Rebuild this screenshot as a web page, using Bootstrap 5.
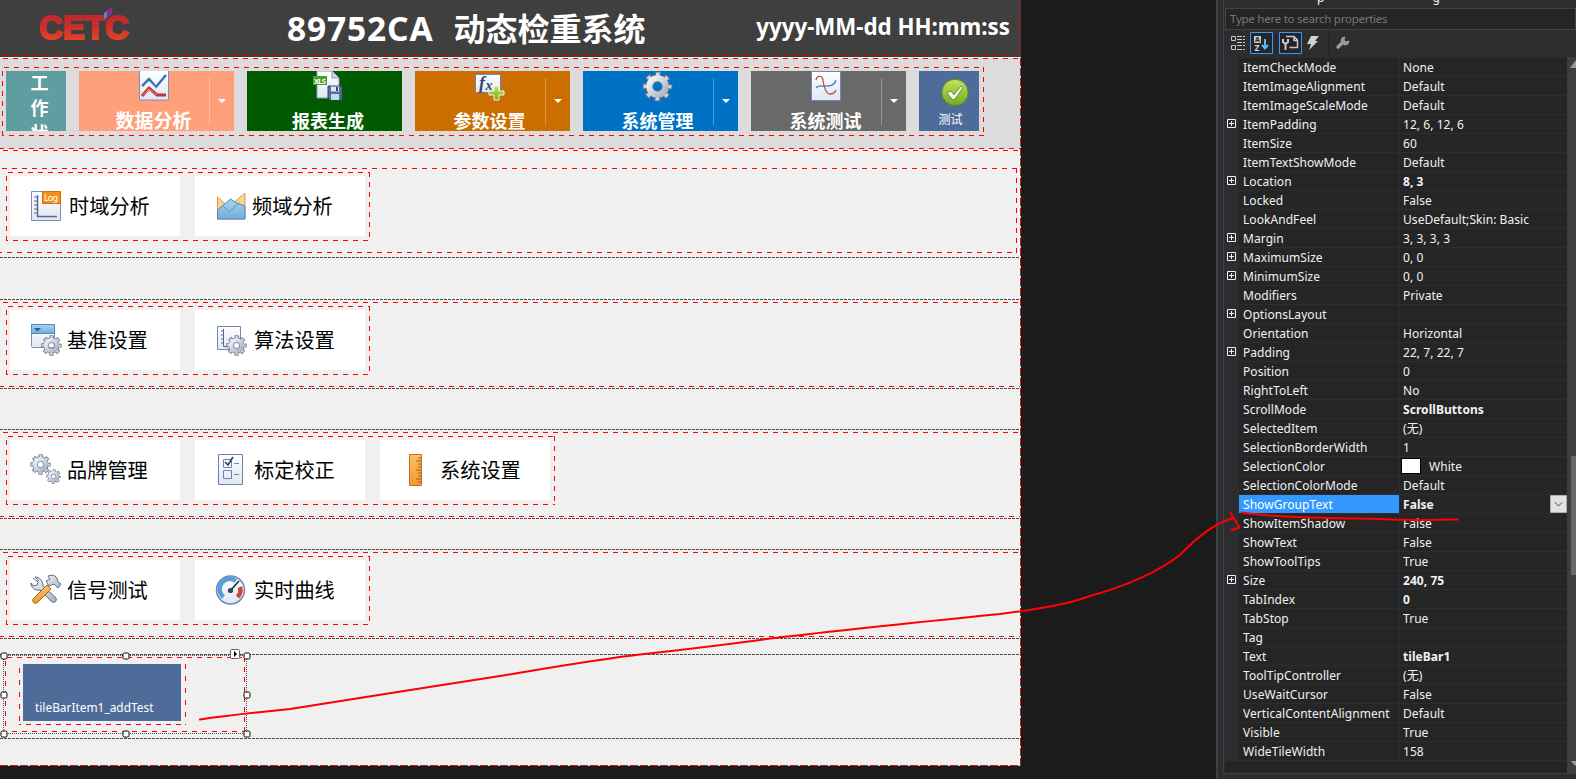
<!DOCTYPE html>
<html lang="zh-CN">
<head>
<meta charset="utf-8">
<title>89752CA 动态检重系统</title>
<link rel="stylesheet" href="https://cdn.jsdelivr.net/npm/bootstrap@5.3.0/dist/css/bootstrap.min.css">
<style>
  body{width:1576px;height:779px;background:#1b1b1c;overflow:hidden;font-family:"Noto Sans","Noto Sans CJK SC",sans-serif;line-height:1}
  svg{display:block;flex:none}
  .designer{width:1021px;height:766px;background:#f0f0f0}
  .designer::after{content:"";position:absolute;right:0;top:58px;bottom:0;width:1px;background:repeating-linear-gradient(#f00 0 5px,#555 5px 8px,#ddd 8px 10px)}
  .designer::before{content:"";position:absolute;left:0;right:0;bottom:0;height:1px;background:repeating-linear-gradient(90deg,#f00 0 5px,#555 5px 8px,#ddd 8px 10px)}
  .red-frame{--h:linear-gradient(90deg,#f00 5px,transparent 5px);--v:linear-gradient(#f00 5px,transparent 5px);
    background-image:var(--h),var(--h),var(--v),var(--v);background-size:10px 1px,10px 1px,1px 10px,1px 10px;
    background-position:2px 0,7px 100%,0 4px,100% 0;background-repeat:repeat-x,repeat-x,repeat-y,repeat-y}
  .red-lines{--h:linear-gradient(90deg,#f00 5px,transparent 5px);background-image:var(--h),var(--h);background-size:10px 1px;background-position:3px 0,9px 100%;background-repeat:repeat-x}
  .app-head{height:57px;background-color:#3f3f3f;color:#fff;font-weight:700}
  .app-head::after{content:"";position:absolute;left:3px;right:1px;top:0;height:56px;
    background:linear-gradient(90deg,#d40000 5px,transparent 5px) 0 100%/10px 1px repeat-x,linear-gradient(#d40000 5px,transparent 5px) 100% 7px/1px 10px repeat-y}
  .app-title{left:287px;top:11px;font-size:32px;line-height:36px;gap:20px;white-space:nowrap}
  .app-title .num{font-size:33.5px;letter-spacing:.85px;margin-top:-1px}
  .head-grid{padding-left:39px;height:56px}
  .clock{font-size:22.3px;line-height:30px;margin:-3px 11px 0 0}
  .strip{height:91px;margin-top:1px;background-color:#dcdcdc;padding:9px 0 0 2px}
  .bar{width:982px;height:69px;padding:4px 0 0 4px;gap:13px}
  .bar .tl{height:60px;width:155px;color:#fff;font-weight:700;font-size:18px}
  .bar .tl.sq{width:60px}
  .face{width:130px;padding-left:19px}
  .face svg{height:31px}
  .face span{margin-top:8px;line-height:22px}
  .drop{width:25px;height:47px;margin-top:7px;border-left:1px solid rgba(255,255,255,.3)}
  .drop::after{content:"";border:4px solid transparent;border-top-color:#fff;border-bottom:0;margin-top:-1px;margin-left:-1px}
  .dark-lines{--d:linear-gradient(90deg,#4c4c4c 3px,transparent 3px);background-image:var(--d),var(--d);background-size:4px 1px;background-position:0 0,0 100%;background-repeat:repeat-x}
  .sect{height:90px;padding:3px 0}
  .sect>.red-lines{height:85px;padding:4px 0 0 6px}
  .grp{height:69px;width:max-content;padding:4px 5px 5px 4px;gap:15px}
  .it{width:170px;height:60px;background:#fff;color:#000;font-size:20.2px;padding-left:20px;gap:5px}
  .it span{line-height:24px;white-space:nowrap}
  .sel{width:244px;height:79px;margin:1px 0 0 3px;border:1px dotted #555}
  .sel .inner{width:240px;height:75px;margin:1px;padding:7px 0 0 14px}
  .sel .blue{width:167px;height:61px;padding:0 0 0 4px}
  .sel .blue div{width:158px;height:57px;background:#4e6c9a;color:#fff;font-size:11.9px;padding:0 0 7px 12px}
  .hd{width:7px;height:7px;background:#fff;border:1px solid #000;border-radius:2px;transform:translate(-50%,-50%)}
  .props{left:1216px;top:0;width:360px;height:779px;background:#2d2d30;border-left:2px solid #3f3f46;color:#f1f1f1;font-size:12px}
  .props .inn{margin-left:5px;border-left:1px solid #3f3f46;height:774px;border-bottom:1px solid #3f3f46;padding-left:1px}
  .cap{height:8px;overflow:hidden;white-space:pre}
  .cap span{line-height:12px;margin-top:-8px}
  .search{height:22px;border:1px solid #434346;background:#252526;color:#777;padding-left:4px;font-size:11.5px;letter-spacing:-.25px}
  .tools{height:28px}
  .pr{height:19px}
  .pr .ex{width:14px;padding:4px 0 0 2px}
  .pr .k{width:160px;background:#252526;border-bottom:1px solid #2d2d30;padding:1px 0 0 4px}
  .pr .v{width:168px;background:#252526;border-bottom:1px solid #2d2d30;border-left:1px solid #2d2d30;padding:1px 0 0 3px}
  .pr.cur .k{background:#3399ff;color:#fff}
  .k,.v{line-height:18px;white-space:nowrap;letter-spacing:.06px}
  .sb{left:1567px;top:57px;width:9px;height:716px;background:#3e3e42}
</style>
</head>
<body>
<svg width="0" height="0" class="position-absolute">
  <defs>
    <linearGradient id="gm" x1="0" y1="0" x2="1" y2="1"><stop offset="0" stop-color="#f1f4f8"/><stop offset="1" stop-color="#a9b3c5"/></linearGradient>
    <linearGradient id="gp" x1="0" y1="0" x2="0" y2="1"><stop offset="0" stop-color="#fff"/><stop offset="1" stop-color="#e0e6f4"/></linearGradient>
    <linearGradient id="gl" x1="0" y1="0" x2="0" y2="1"><stop offset="0" stop-color="#b5252d"/><stop offset=".5" stop-color="#c9302b"/><stop offset="1" stop-color="#f04e23"/></linearGradient>
    <linearGradient id="gg" x1="0" y1="0" x2="0" y2="1"><stop offset="0" stop-color="#c3e35c"/><stop offset="1" stop-color="#74a91e"/></linearGradient>
    <linearGradient id="go" x1="0" y1="0" x2="0" y2="1"><stop offset="0" stop-color="#f8c36a"/><stop offset="1" stop-color="#f39a2b"/></linearGradient>
    <linearGradient id="gb" x1="0" y1="0" x2="0" y2="1"><stop offset="0" stop-color="#a9d3ee"/><stop offset="1" stop-color="#70aedb"/></linearGradient>
    <symbol id="gear" viewBox="-15 -15 30 30">
      <g fill="none"><circle r="11.5" stroke="#66718a" stroke-width="6" stroke-dasharray="5.4 3.63" stroke-dashoffset="2.7"/>
      <circle r="8.2" stroke="#66718a" stroke-width="7"/>
      <circle r="11" stroke="#cdd4df" stroke-width="5" stroke-dasharray="3.4 5.24" stroke-dashoffset="1.7"/>
      <circle r="7.8" stroke="url(#gm)" stroke-width="6"/><circle r="4.4" stroke="#6d7890" stroke-width="1"/></g>
    </symbol>
  </defs>
</svg>

<main class="designer position-relative d-flex flex-column">
  <header class="app-head position-relative">
    <div class="head-grid d-flex align-items-center justify-content-between">
      <svg width="94" height="44" viewBox="0 -4 94 44"><text x="0" y="29" font-family="Liberation Sans" font-weight="700" font-size="34" textLength="90" lengthAdjust="spacingAndGlyphs" fill="url(#gl)" stroke="url(#gl)" stroke-width="2">CETC</text><path d="M65 3l8-5v6l-8 5z" fill="#4b8fc9"/><path d="M68 0l5-3v7l-5 3z" fill="#8a2a8f"/></svg>
      <span class="clock">yyyy-MM-dd HH:mm:ss</span>
    </div>
    <div class="app-title position-absolute d-flex"><span class="num">89752CA</span><span>动态检重系统</span></div>
  </header>

  <section class="strip red-lines">
    <div class="bar red-frame d-flex">
      <div class="tl sq text-center overflow-hidden" style="background:#5f9ea0;line-height:25px;padding-left:7px">工<br>作<br>状</div>
      <div class="tl d-flex" style="background:#ffa07a">
        <div class="face d-flex flex-column align-items-center"><svg width="30" height="31" viewBox="0 0 30 31"><path d="M.5-1v30h29V-1z" fill="url(#gp)" stroke="#7d8cb5"/><path d="M3 15l7-7 7 8L27 4" fill="none" stroke="#3a6db0" stroke-width="2.4"/><path d="M4 16l6-6 7 7" fill="none" stroke="#8ecbe8"/><path d="M3 25l7-8 8 7h9" fill="none" stroke="#b9352d" stroke-width="3"/><path d="M4 24l6-6 8 6" fill="none" stroke="#ef8a7c"/></svg><span style="font-size:19px">数据分析</span></div>
        <div class="drop d-flex align-items-center justify-content-center"></div>
      </div>
      <div class="tl d-flex" style="background:#005a00">
        <div class="face w-100 d-flex flex-column align-items-center" style="padding-left:7px"><svg width="30" height="31" viewBox="0 0 30 31"><path d="M4 0h15l7 7v20H4z" fill="url(#gp)" stroke="#8e99b5"/><path d="M19 0v7h7" fill="#cfd8ea" stroke="#8e99b5"/><path d="M0 5h14v9H0z" fill="#4aa02c"/><text x="1" y="12.5" font-size="7.5" font-weight="700" fill="#fff" textLength="12">XLS</text><path d="M15 15h14v14H17l-2-2z" fill="#5a6d92" stroke="#33466b"/><path d="M18 15.500h8v5h-8z" fill="#dfe7f3"/><path d="M23 16h2v4h-2z" fill="#33466b"/><path d="M18 23h8v6h-8z" fill="#b7dff0"/></svg><span>报表生成</span></div>
      </div>
      <div class="tl d-flex" style="background:#cc6d00">
        <div class="face d-flex flex-column align-items-center"><svg width="30" height="31" viewBox="0 0 30 31"><path d="M.5 3.500h25v18H.5z" fill="url(#gp)" stroke="#6f83ad"/><text x="4" y="18" font-family="Liberation Serif" font-style="italic" font-weight="700" font-size="18" fill="#34476b">f</text><text x="10.500" y="19" font-family="Liberation Serif" font-style="italic" font-weight="700" font-size="14" fill="#34476b">x</text><path d="M19 15h5v5h5v4h-5v5h-5v-5h-5v-4h5z" fill="url(#gg)" stroke="#f4fae2"/></svg><span>参数设置</span></div>
        <div class="drop d-flex align-items-center justify-content-center"></div>
      </div>
      <div class="tl d-flex" style="background:#0072c6">
        <div class="face d-flex flex-column align-items-center"><svg width="31" height="31"><use href="#gear" width="31" height="31"/><circle cx="15.500" cy="15.500" r="4" fill="#0072c6"/></svg><span>系统管理</span></div>
        <div class="drop d-flex align-items-center justify-content-center"></div>
      </div>
      <div class="tl d-flex" style="background:#696969">
        <div class="face d-flex flex-column align-items-center"><svg width="30" height="31" viewBox="0 0 30 31"><path d="M.5.5h29v29H.5z" fill="url(#gp)" stroke="#7486b3"/><path d="M5 17c3-4 7-1 11-2 4 0 8-1 9-6" fill="none" stroke="#4a7fae" stroke-width="1.300"/><path d="M5 9c1-5 7-5 7 1 1 6 3 13 7 13 3 0 5-1 6-4" fill="none" stroke="#b2543f" stroke-width="1.300"/></svg><span>系统测试</span></div>
        <div class="drop d-flex align-items-center justify-content-center"></div>
      </div>
      <div class="tl sq d-flex flex-column align-items-center" style="background:#4e6c9a;font-size:12px;font-weight:400">
        <svg width="30" height="30" viewBox="0 0 30 30" style="margin:7px 0 0 12px"><circle cx="15" cy="14.500" r="13.200" fill="url(#gg)" stroke="#5d8a1c"/><path d="M7 15l4-2 3 4 7-9 2 1.500-8.500 12h-2z" fill="#fff" stroke="#55752a" stroke-width=".8"/></svg>
        <span style="margin:4px 0 0 3px;line-height:16px">测试</span>
      </div>
    </div>
  </section>

  <section class="red-lines" style="height:109px;margin-top:1px;background-size:10px 1px,0 0;background-position:3px 0,0 0">
    <div class="dark-lines" style="height:108px;padding-top:18px;background-size:0 0,4px 1px">
      <div class="red-frame" style="width:1017px;height:85px;padding:4px 0 0 6px;background-size:10px 1px,10px 1px,0 0,1px 10px">
        <div class="grp red-frame d-flex">
          <div class="it d-flex align-items-center"><svg width="32" height="34" viewBox="0 0 32 34"><path d="M1.500 2.500h29v29h-29z" fill="url(#gp)" stroke="#7f8fb8"/><path d="M7.500 6v21.500H27" fill="none" stroke="#56688e" stroke-width="1.500"/><path d="M4 8h3M4 12h3M4 16h3M4 20h3M4 24h3" stroke="#56688e"/><path d="M12.500 2.500h18v12h-18z" fill="#f3911d" stroke="#d36d0c"/><text x="14" y="12" font-size="9" fill="#fff" textLength="14">Log</text></svg><span style="margin-left:2px">时域分析</span></div>
          <div class="it d-flex align-items-center" style="padding-left:21px"><svg width="32" height="34" viewBox="0 0 32 34"><path d="M1.500 8l11 10L29 4v26H1.500z" fill="#f8d48c" stroke="#cf9b62"/><path d="M1.500 21l13-11 6 4 8.500 3v13H1.500z" fill="url(#gb)" stroke="#4e86ba"/><path d="M6 16l7 7 10-9" fill="none" stroke="#5c98c9"/></svg><span style="margin-left:-1px">频域分析</span></div>
        </div>
      </div>
    </div>
  </section>

  <section class="sect dark-lines" style="margin-top:40px">
    <div class="red-lines"><div class="grp red-frame d-flex">
      <div class="it d-flex align-items-center"><svg width="32" height="34" viewBox="0 0 32 34"><rect x="1.500" y="1.500" width="23" height="23" rx="1" fill="url(#gp)" stroke="#7f8fb8"/><path d="M1.500 1.500h23v9h-23z" fill="url(#gb)" stroke="#4e8cc4"/><path d="M4 5h7l-3.500 3.500z" fill="#2a5a93"/><use href="#gear" x="11" y="12" width="21" height="21"/><circle cx="21.500" cy="22.500" r="2" fill="#fff"/></svg><span>基准设置</span></div>
      <div class="it d-flex align-items-center" style="padding-left:22px"><svg width="32" height="34" viewBox="0 0 32 34"><path d="M.5 3.500h23v23H.5z" fill="url(#gp)" stroke="#7486b0"/><path d="M6.500 6v17.500H13M4 8h3M4 12h3M4 16h3M4 20h3" fill="none" stroke="#56688e"/><use href="#gear" x="9" y="12" width="21" height="21"/><circle cx="19.500" cy="22.500" r="2" fill="#fff"/></svg><span>算法设置</span></div>
    </div></div>
  </section>

  <section class="sect dark-lines" style="margin-top:40px">
    <div class="red-lines"><div class="grp red-frame d-flex">
      <div class="it d-flex align-items-center"><svg width="32" height="34" viewBox="0 0 32 34"><use href="#gear" x="0" y="1" width="21" height="21"/><circle cx="10.500" cy="11.500" r="2" fill="#fff"/><use href="#gear" x="16" y="16" width="15" height="15"/><circle cx="23.500" cy="23.500" r="1.500" fill="#fff"/></svg><span>品牌管理</span></div>
      <div class="it d-flex align-items-center" style="padding-left:22px"><svg width="32" height="34" viewBox="0 0 32 34"><path d="M1.500 1.500h24v30h-24z" fill="url(#gp)" stroke="#6f82ad"/><path d="M6.500 6.500h8v8h-8zM6.500 17.500h8v8h-8zM17 10.500h5M17 21.500h5" fill="none" stroke="#6f82ad"/><path d="M8 9l3 3 5-8" fill="none" stroke="#333f58" stroke-width="1.600"/></svg><span>标定校正</span></div>
      <div class="it d-flex align-items-center" style="padding-left:23px"><svg width="32" height="34" viewBox="0 0 32 34"><path d="M6.500 1.500h12v31h-12z" fill="url(#go)" stroke="#c46f1c"/><path d="M18 5h-3M18 8h-5M18 11h-3M18 14h-3M18 17h-5M18 20h-3M18 23h-3M18 26h-5M18 29h-3" stroke="#a65a14"/></svg><span>系统设置</span></div>
    </div></div>
  </section>

  <section class="sect dark-lines" style="margin-top:30px">
    <div class="red-lines"><div class="grp red-frame d-flex">
      <div class="it d-flex align-items-center"><svg width="32" height="34" viewBox="0 0 32 34"><path d="M3 5l5 4-1 3-4 1-2-3c0 5 4 8 9 7l12 12c3 1 5-1 4-4L13 13c0-5-3-9-8-9l4 4" fill="url(#gm)" stroke="#5e6b85"/><path d="M18 3c6-2 9 0 10 6l3 2-3 4-4-4-5 2-3-5 4-2z" fill="url(#gm)" stroke="#5e6b85"/><path d="M17 12l4 4L7 30c-3 1-5-1-4-4z" fill="url(#go)" stroke="#a8691c"/></svg><span>信号测试</span></div>
      <div class="it d-flex align-items-center" style="padding-left:20px"><svg width="32" height="34" viewBox="0 0 32 34"><circle cx="15.500" cy="17" r="14" fill="url(#gp)" stroke="#7486b3" stroke-width="1.500"/><path d="M8.500 24a10 10 0 0 1 12.500-16" fill="none" stroke="#5a9fd8" stroke-width="4.500"/><path d="M25 14a10 10 0 0 1-2.500 10" fill="none" stroke="#cd4638" stroke-width="4.500"/><path d="M15 18l9-10" stroke="#27344e" stroke-width="1.800"/><circle cx="15.500" cy="17.500" r="2.600" fill="#34425f"/></svg><span style="margin-left:2px">实时曲线</span></div>
    </div></div>
  </section>

  <section class="dark-lines position-relative" style="height:85px;margin-top:15px">
    <div class="sel position-relative">
      <div class="inner red-frame"><div class="blue red-frame" style="background-size:0 0,10px 1px,1px 12px,1px 12px"><div class="d-flex align-items-end">tileBarItem1_addTest</div></div></div>
    </div>
    <i class="hd position-absolute" style="left:3.5px;top:1.5px"></i><i class="hd position-absolute" style="left:125.5px;top:1.5px"></i><i class="hd position-absolute" style="left:246.5px;top:1.5px"></i>
    <i class="hd position-absolute" style="left:3.5px;top:40.5px"></i><i class="hd position-absolute" style="left:246.5px;top:40.5px"></i>
    <i class="hd position-absolute" style="left:3.5px;top:79.5px"></i><i class="hd position-absolute" style="left:125.5px;top:79.5px"></i><i class="hd position-absolute" style="left:246.5px;top:79.5px"></i>
    <svg class="position-absolute" style="left:230px;top:-5px" width="10" height="10"><rect x=".5" y=".5" width="9" height="9" rx="1" fill="#fff" stroke="#666"/><path d="M4 2l3 3-3 3z"/></svg>
  </section>
</main>

<aside class="props position-absolute">
  <div class="inn">
    <div class="cap d-flex"><span style="margin-left:92px">p</span><span style="margin-left:108px">g</span></div>
    <div class="search d-flex align-items-center">Type here to search properties</div>
    <div class="tools d-flex">
      <svg width="140" height="28" viewBox="1225 30 140 28" fill="none" stroke="#c8c8c8">
        <path d="M1231.500 36.500h4v4h-4zM1231.500 45.500h4v4h-4z"/><path d="M1237 36.500h5m1 0h2M1237 39.500h5m1 0h2M1237 42.500h5m1 0h2M1237 45.500h5m1 0h2M1237 49.500h5m1 0h2" stroke-width="1.200"/>
        <path d="M1250.500 32.500h22v21h-22zM1279.500 32.500h22v21h-22z" stroke="#3399ff" fill="#252526"/>
        <path d="M1276.500 34v20M1328.500 34v20" stroke="#222"/>
        <rect x="1254" y="36" width="7" height="7" fill="#c8c8c8" stroke="none"/><text x="1255" y="42" font-size="7" font-weight="700" fill="#252526" stroke="none">A</text><text x="1254.500" y="50.500" font-size="8.500" font-weight="700" fill="#d8d8d8" stroke="none">Z</text>
        <path d="M1265 39v9M1262 45l3 3.500 3-3.500" stroke="#55b8f5" stroke-width="2"/>
        <path d="M1286 36.500h8l3.500 3.500v7.500h-8M1294 36.500v4h3.500" stroke-width="1.500"/><path d="M1283 39v3l2.500 2 2.500-2v-3M1285.500 43v7" stroke-width="2"/>
        <path d="M1311 36h8l-4 5h3l-9 9 2-6h-4z" fill="#d0d0d0" stroke="none"/>
        <path d="M1338 47l5-5" stroke="#999" stroke-width="3.500" stroke-linecap="round"/><path d="M1345 37a4 4 0 1 0 4 4l-3 1-2-2z" fill="#999" stroke="#999"/>
      </svg>
    </div>
    <div id="rows"></div>
    <div style="height:12px;width:342px;background:#252526"></div>
  </div>
</aside>
<div class="sb position-absolute"><svg width="9" height="716" fill="#999"><path d="M9 4v7H3l5-7z"/><path d="M4 399h5v119H4z" fill="#686868"/><path d="M4 704h8l-4 5z"/></svg></div>

<svg class="position-absolute top-0 start-0" width="1576" height="779" fill="none" stroke="#f00" stroke-width="2" stroke-linecap="round" stroke-linejoin="round">
  <path d="M200 719.500C230 715 260 712 290 709C350 699 430 687 500 676C560 666 600 659 640 654.500C690 649 730 644 775 638C850 629 930 621 1000 614C1040 609 1070 604 1090 596C1130 585 1160 570 1180 555C1200 534 1215 524 1233 518"/>
  <path d="M1230.500 513l9 14.500-8 2.500"/>
  <path d="M1241.500 512.500C1280 518 1330 518 1380 519C1410 520.500 1430 520 1458 519.500"/>
</svg>

<script>
  // name | value | flags: + expandable, b bold value, w colour swatch, s selected row
  const data = `ItemCheckMode|None
ItemImageAlignment|Default
ItemImageScaleMode|Default
ItemPadding|12, 6, 12, 6|+
ItemSize|60
ItemTextShowMode|Default
Location|8, 3|+b
Locked|False
LookAndFeel|UseDefault;Skin: Basic
Margin|3, 3, 3, 3|+
MaximumSize|0, 0|+
MinimumSize|0, 0|+
Modifiers|Private
OptionsLayout||+
Orientation|Horizontal
Padding|22, 7, 22, 7|+
Position|0
RightToLeft|No
ScrollMode|ScrollButtons|b
SelectedItem|(无)
SelectionBorderWidth|1
SelectionColor|White|w
SelectionColorMode|Default
ShowGroupText|False|sb
ShowItemShadow|False
ShowText|False
ShowToolTips|True
Size|240, 75|+b
TabIndex|0|b
TabStop|True
Tag|
Text|tileBar1|b
ToolTipController|(无)
UseWaitCursor|False
VerticalContentAlignment|Default
Visible|True
WideTileWidth|158`;
  const plus = '<svg width="9" height="9" fill="none" stroke="#f1f1f1"><path d="M.5.5h8v8h-8zM2 4.500h5M4.500 2v5"/></svg>';
  const swatch = '<i style="width:20px;height:16px;background:#fff;border:1px solid #000;margin:0 8px 0 -2px"></i>';
  const arrow = '<svg class="ms-auto" style="margin-top:-1px" width="17" height="18"><path d="M.5.5h16v17H.5z" fill="#e1e1e1" stroke="#adadad"/><path d="M5 7.500l3.500 3.500L12 7.500" fill="none" stroke="#444"/></svg>';
  document.getElementById('rows').innerHTML = data.split('\n').map(l => {
    const [k, v, f = ''] = l.split('|');
    return `<div class="pr d-flex ${f.includes('s') ? 'cur' : ''}"><div class="ex">${f.includes('+') ? plus : ''}</div><div class="k">${k}</div><div class="v d-flex ${f.includes('b') ? 'fw-bold' : ''}">${f.includes('w') ? swatch : ''}${v}${f.includes('s') ? arrow : ''}</div></div>`;
  }).join('');
</script>
<script src="https://cdn.jsdelivr.net/npm/bootstrap@5.3.0/dist/js/bootstrap.bundle.min.js"></script>
</body>
</html>
